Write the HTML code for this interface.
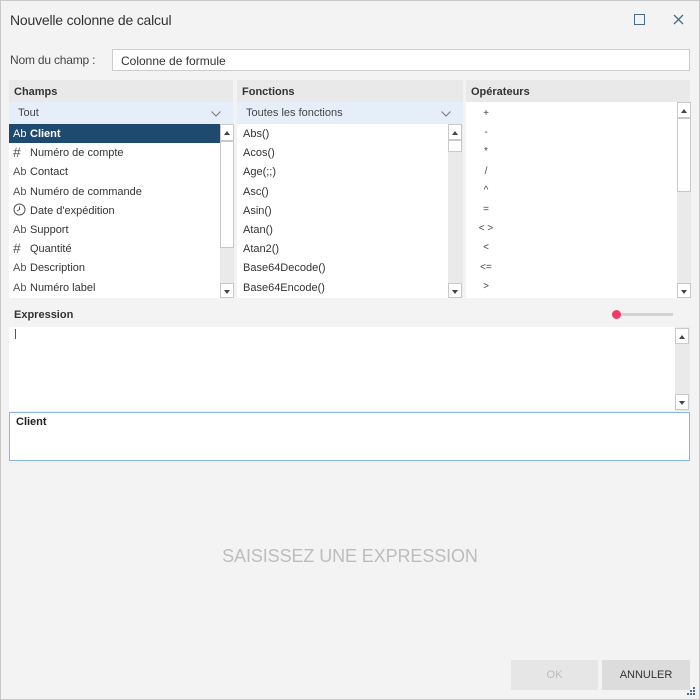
<!DOCTYPE html>
<html><head><meta charset="utf-8"><style>
*{box-sizing:border-box;margin:0;padding:0}
body{width:700px;height:700px;background:#f3f3f3;font-family:"Liberation Sans",sans-serif;position:relative;overflow:hidden;color:#333}
.frame{position:absolute;left:0;top:0;width:700px;height:700px;border:1px solid #c8c8c8}
.a{position:absolute}
.hdr{background:#e9e9e9;font-weight:bold;font-size:11px;color:#333;padding:6px 5px 0;height:22px}
.dd{background:#e6eef9;font-size:11px;color:#444;padding:5px 9px 0;height:22px}
.list{background:#fff}
.row{height:19.2px;font-size:11px;line-height:21px;padding-left:4px;color:#333;white-space:nowrap;overflow:hidden}
.row .ic{display:inline-block;width:17px;color:#555;font-size:11px;line-height:19px;height:19px;vertical-align:top;padding-top:1px}
.sel{background:#1f4a70;color:#fff;font-weight:bold}
.sel .ic{color:#fff;font-weight:normal}
.sb{background:#eaeaea}
.btn{background:#fff;border:1px solid #c9c9c9;position:absolute;left:0;width:14px}
.up::after,.dn::after{content:"";position:absolute;left:3px;border-left:3px solid transparent;border-right:3px solid transparent}
.up::after{top:6px;border-bottom:4px solid #444}
.dn::after{top:6px;border-top:4px solid #444}
.op{height:19.2px;font-size:10px;line-height:19px;padding-left:10px;color:#444;width:30px;text-align:center}
</style></head><body>
<div class="frame"></div>
<div class="a" style="left:10px;top:12px;font-size:14px;color:#333;letter-spacing:-0.2px">Nouvelle colonne de calcul</div>
<div class="a" style="left:634px;top:14px;width:11px;height:11px;border:1.5px solid #4a6b8a"></div>
<svg class="a" style="left:673px;top:14px" width="11" height="11"><path d="M1 1L10 10M10 1L1 10" stroke="#4a6b8a" stroke-width="1.3"/></svg>
<div class="a" style="left:10px;top:53px;font-size:12px;color:#444;letter-spacing:-0.2px">Nom du champ :</div>
<div class="a" style="left:112px;top:49px;width:578px;height:22px;background:#fff;border:1px solid #ccc;font-size:12px;padding:4px 8px;color:#333">Colonne de formule</div>

<!-- Champs -->
<div class="a hdr" style="left:9px;top:80px;width:224px">Champs</div>
<div class="a dd" style="left:9px;top:102px;width:224px">Tout<svg class="a" style="right:12px;top:9px" width="10" height="6"><path d="M0.5 0.5L5 5L9.5 0.5" stroke="#777" fill="none"/></svg></div>
<div class="a list" style="left:9px;top:124px;width:211px;height:174px">
<div class="row sel"><span class="ic">Ab</span>Client</div>
<div class="row"><span class="ic" style="font-size:14px;padding-top:0">#</span>Numéro de compte</div>
<div class="row"><span class="ic">Ab</span>Contact</div>
<div class="row"><span class="ic">Ab</span>Numéro de commande</div>
<div class="row"><span class="ic"><svg width="13" height="13" style="vertical-align:-2px"><circle cx="6.5" cy="6.5" r="5.5" fill="none" stroke="#555"/><path d="M6.5 3.5V6.5L4 8" stroke="#555" fill="none"/></svg></span>Date d'expédition</div>
<div class="row"><span class="ic">Ab</span>Support</div>
<div class="row"><span class="ic" style="font-size:14px;padding-top:0">#</span>Quantité</div>
<div class="row"><span class="ic">Ab</span>Description</div>
<div class="row"><span class="ic">Ab</span>Numéro label</div>
</div>
<div class="a sb" style="left:220px;top:124px;width:14px;height:174px">
<div class="btn up" style="top:0;height:17px"></div>
<div class="btn" style="top:17px;height:107px"></div>
<div class="btn dn" style="top:159px;height:15px"></div></div>

<!-- Fonctions -->
<div class="a hdr" style="left:237px;top:80px;width:226px">Fonctions</div>
<div class="a dd" style="left:237px;top:102px;width:226px">Toutes les fonctions<svg class="a" style="right:12px;top:9px" width="10" height="6"><path d="M0.5 0.5L5 5L9.5 0.5" stroke="#777" fill="none"/></svg></div>
<div class="a list" style="left:237px;top:124px;width:211px;height:174px;padding-left:2px">
<div class="row">Abs()</div><div class="row">Acos()</div><div class="row">Age(;;)</div><div class="row">Asc()</div><div class="row">Asin()</div><div class="row">Atan()</div><div class="row">Atan2()</div><div class="row">Base64Decode()</div><div class="row">Base64Encode()</div>
</div>
<div class="a sb" style="left:448px;top:124px;width:15px;height:174px">
<div class="btn up" style="top:0;height:16px"></div>
<div class="btn" style="top:16px;height:12px"></div>
<div class="btn dn" style="top:159px;height:15px"></div></div>

<!-- Operateurs -->
<div class="a hdr" style="left:466px;top:80px;width:224px">Opérateurs</div>
<div class="a list" style="left:466px;top:102px;width:211px;height:196px;padding-top:2px">
<div class="op">+</div><div class="op">-</div><div class="op">*</div><div class="op">/</div><div class="op">^</div><div class="op">=</div><div class="op">&lt; &gt;</div><div class="op">&lt;</div><div class="op">&lt;=</div><div class="op">&gt;</div>
</div>
<div class="a sb" style="left:677px;top:102px;width:14px;height:196px">
<div class="btn up" style="top:0;height:16px"></div>
<div class="btn" style="top:16px;height:74px"></div>
<div class="btn dn" style="top:181px;height:15px"></div></div>

<!-- Expression -->
<div class="a" style="left:14px;top:309px;font-size:11px;font-weight:bold;color:#333">Expression</div>
<div class="a" style="left:618px;top:313px;width:55px;height:3px;background:#d3d3d3"></div>
<div class="a" style="left:612px;top:310px;width:9px;height:9px;border-radius:50%;background:#f43a64"></div>
<div class="a" style="left:9px;top:327px;width:681px;height:84px;background:#fff"></div>
<div class="a" style="left:15px;top:329px;width:1px;height:10px;background:#555"></div>
<div class="a sb" style="left:675px;top:327px;width:15px;height:84px">
<div class="btn up" style="top:1px;height:16px"></div>
<div class="btn dn" style="top:67px;height:16px"></div></div>
<div class="a" style="left:9px;top:412px;width:681px;height:49px;background:#fff;border:1px solid #8ab6e4;font-size:11px;font-weight:bold;padding:3px 6px;color:#222">Client</div>

<div class="a" style="left:0;top:546px;width:700px;text-align:center;font-size:18px;color:#bdbdbd;letter-spacing:-0.1px">SAISISSEZ UNE EXPRESSION</div>

<div class="a" style="left:511px;top:660px;width:87px;height:30px;background:#e6e6e6;font-size:11px;color:#bbb;text-align:center;line-height:30px">OK</div>
<div class="a" style="left:602px;top:660px;width:88px;height:30px;background:#dcdcdc;font-size:11px;color:#333;text-align:center;line-height:30px">ANNULER</div>
<svg class="a" style="left:686px;top:686px" width="10" height="10"><g fill="#4a6b8a"><rect x="7" y="1" width="2" height="2"/><rect x="4" y="4" width="2" height="2"/><rect x="7" y="4" width="2" height="2"/><rect x="1" y="7" width="2" height="2"/><rect x="4" y="7" width="2" height="2"/><rect x="7" y="7" width="2" height="2"/></g></svg>
</body></html>
